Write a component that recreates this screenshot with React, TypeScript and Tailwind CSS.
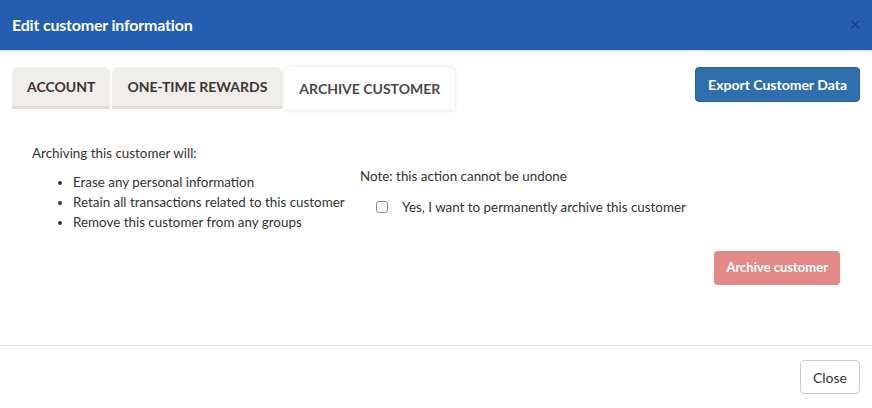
import React, { useState } from "react";

const tabs = ["Account", "One-time rewards", "Archive customer"];

export default function App() {
  const [confirmed, setConfirmed] = useState(false);
  const active = 2;

  return (
    <div className="w-[872px] h-[408px] bg-white flex flex-col font-['Lato',sans-serif] text-[#333]">
      {/* header */}
      <div className="h-[51px] bg-[#255db0] border-b border-[#d9dde3] flex items-center justify-between pl-3 pr-[11px] shrink-0">
        <h1 className="text-white font-bold text-[16px] tracking-[-0.2px]">Edit customer information</h1>
        <button className="text-[#17427f] text-[20px] leading-none -mt-[4px]">×</button>
      </div>

      {/* body */}
      <div className="flex-1 px-3 pt-4">
        <div className="flex items-start justify-between">
          <div className="flex gap-[2px]">
            {tabs.map((t, i) =>
              i === active ? (
                <div
                  key={t}
                  className="h-[43px] px-[15px] flex items-center bg-white rounded-t-md shadow-[0_0_5px_rgba(0,0,0,0.12)] uppercase font-bold text-[14px] text-[#4a4a4a]"
                >
                  {t}
                </div>
              ) : (
                <div
                  key={t}
                  className="h-[42px] px-[15px] flex items-center bg-[#f0eeeb] rounded-t-md border-b-[3px] border-[#e0ddd9] uppercase font-bold text-[14px] text-[#3d3434]"
                >
                  {t}
                </div>
              )
            )}
          </div>
          <button className="h-[35px] px-[12px] bg-[#2f6fad] border border-[#2a629a] rounded-[4px] text-white font-bold text-[14px]">
            Export Customer Data
          </button>
        </div>

        <div className="flex pt-[33px] pl-5 text-[13.4px]">
          <div className="w-[328px]">
            <p className="leading-5">Archiving this customer will:</p>
            <ul className="list-disc pl-[41px] mt-[9px] leading-5">
              <li>Erase any personal information</li>
              <li>Retain all transactions related to this customer</li>
              <li>Remove this customer from any groups</li>
            </ul>
          </div>
          <div className="pt-[23px] flex-1">
            <p className="leading-5">Note: this action cannot be undone</p>
            <label className="flex items-center gap-[14px] pl-4 mt-[11px] leading-5">
              <input
                type="checkbox"
                checked={confirmed}
                onChange={(e) => setConfirmed(e.target.checked)}
                className="w-[12px] h-[12px] appearance-none border border-[#8a8a8a] rounded-[3px] bg-white"
              />
              Yes, I want to permanently archive this customer
            </label>
            <div className="flex justify-end mt-[34px] pr-[20px]">
              <button className="h-[34px] px-[12px] bg-[#e38a89] rounded-[4px] text-white font-bold text-[13px]">
                Archive customer
              </button>
            </div>
          </div>
        </div>
      </div>

      {/* footer */}
      <div className="h-[63px] border-t border-[#e5e5e5] flex items-center justify-end pr-3 shrink-0">
        <button className="h-[34px] px-3 bg-white border border-[#ccc] rounded-[4px] text-[14px] text-[#333]">
          Close
        </button>
      </div>
    </div>
  );
}
